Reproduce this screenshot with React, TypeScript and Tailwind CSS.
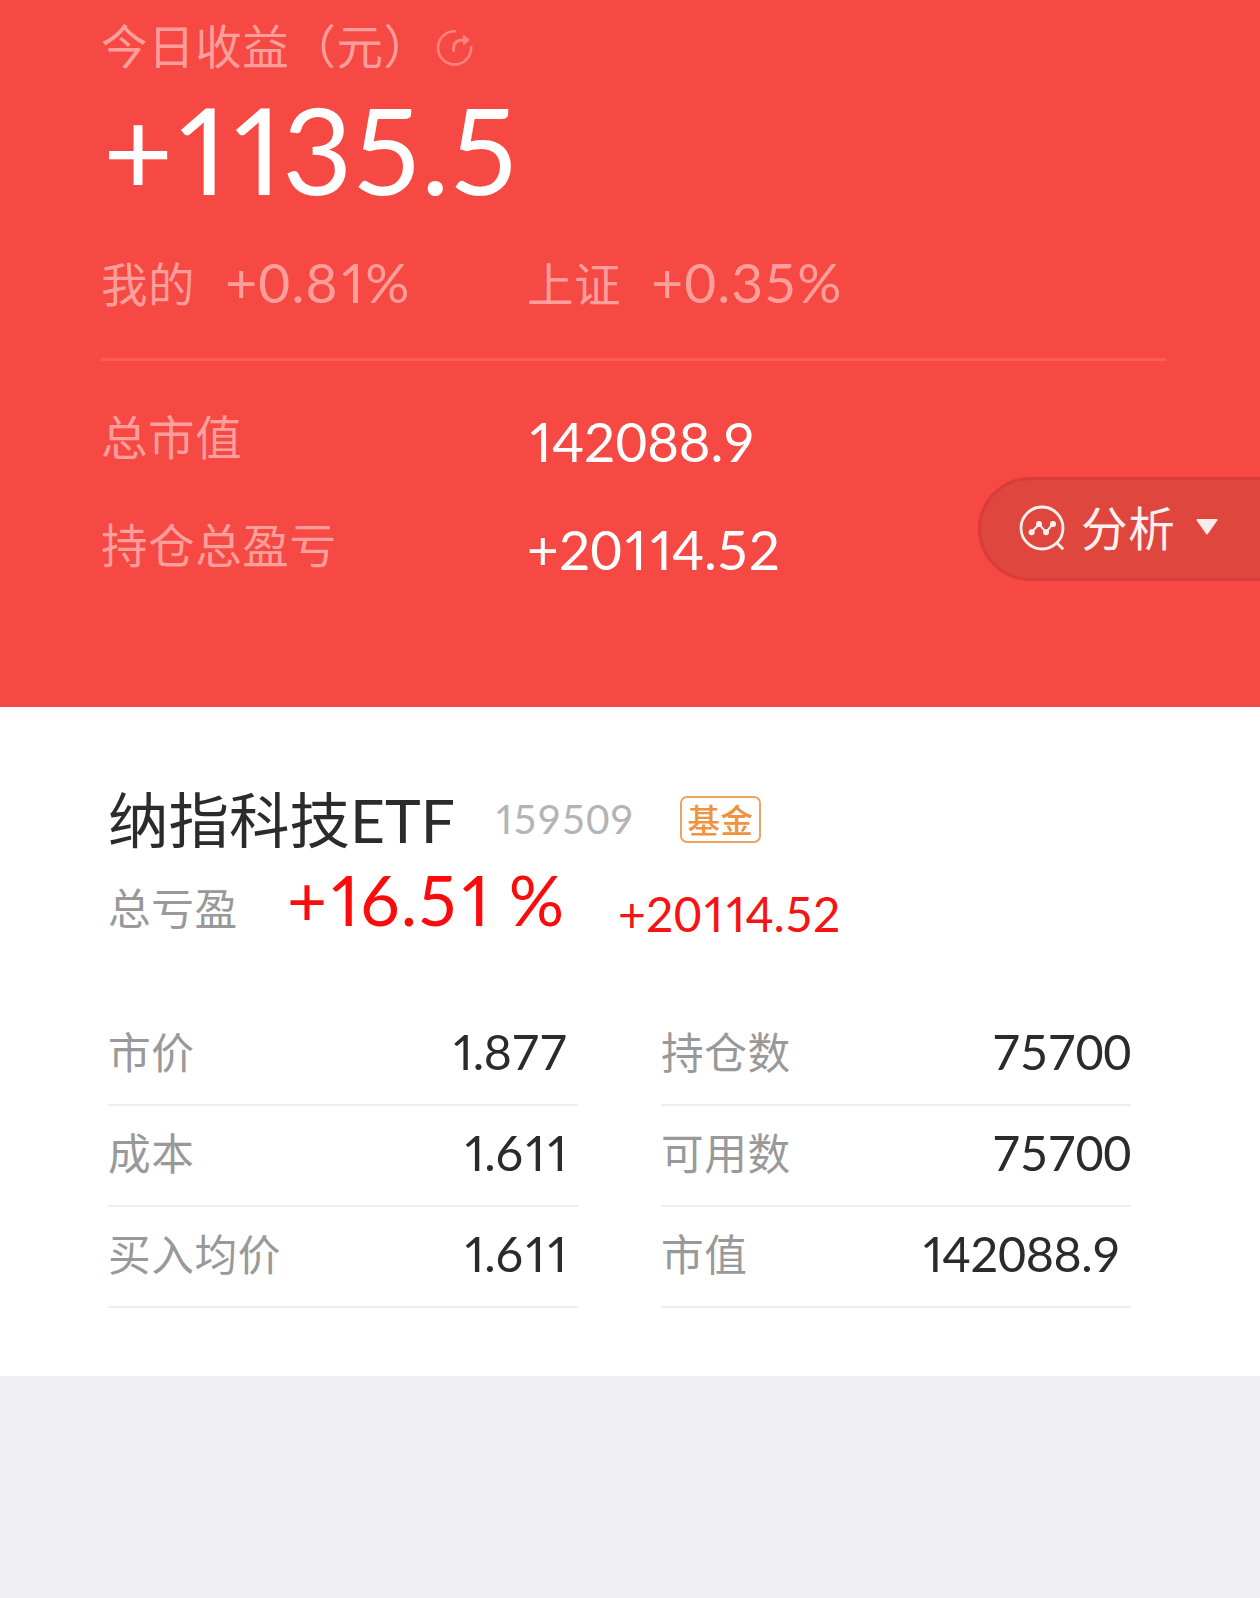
const cjk = "font-['Noto_Sans_CJK_SC',sans-serif]";
const num = "font-['Lato','Noto_Sans_CJK_SC',sans-serif] whitespace-pre";

function RefreshIcon() {
  return (
    <svg className="size-[40px]" viewBox="0 0 40 40" fill="none" stroke="#ff827d" strokeWidth="2.6" strokeLinecap="round">
      <path d="M20 3.2A16.6 16.6 0 1 0 36.2 19.3" />
      <path d="M18.6 22.6V20C18.6 14.5 21.5 12 28 12" strokeWidth="3" />
      <path d="M28.6 7.6L34 12L28.6 16.4Z" fill="#ff827d" strokeWidth="1.4" strokeLinejoin="round" />
    </svg>
  );
}

function AnalysisIcon() {
  return (
    <svg className="size-[48px]" viewBox="0 0 48 48" fill="none" stroke="#fff1f0" strokeWidth="2.8">
      <circle cx="24" cy="24" r="21" />
      <path d="M38 38L45.2 45.2" />
      <path d="M13.8 28L21 20L28 28.3L34.8 20" strokeWidth="2" />
      <g fill="#fff1f0" stroke="none">
        <circle cx="13.6" cy="28.2" r="3" />
        <circle cx="21" cy="20" r="3" />
        <circle cx="28" cy="28.3" r="3" />
        <circle cx="35" cy="20" r="3" />
      </g>
    </svg>
  );
}

/** Figures of equal width, apart from a narrower "1". */
function Num({ children, className = '' }: { children: string; className?: string }) {
  return (
    <span className={`${num} ${className}`}>
      {children.split(/(1)/).map((part, i) =>
        part === '1' ? (
          <span key={i} className="ml-[0.055em] mr-[0.01em] [font-feature-settings:'pnum']">1</span>
        ) : (
          part
        ),
      )}
    </span>
  );
}

function Cell({ label, value, pad }: { label: string; value: string; pad: string }) {
  return (
    <div className="flex h-[101px] items-start justify-between border-b-2 border-[#eeeeee] pt-[15px]">
      <span className={`${cjk} text-[42.7px] leading-[60px] tracking-[0.6px] text-[#999999]`}>{label}</span>
      <Num className={`${pad} pt-px text-[48.5px] leading-[60px] tracking-[-0.4px] text-[#2b2b2b]`}>{value}</Num>
    </div>
  );
}

export default function App() {
  return (
    <div className="flex h-[1598px] w-[1260px] flex-col overflow-hidden bg-[#efeff4]">
      <header className="relative h-[707px] shrink-0 bg-[#f64943] pl-[101px] pr-[94px] pt-[14px]">
        <div className="flex h-[60px] items-center">
          <span className={`${cjk} text-[46.5px] leading-[60px] tracking-[0.6px] text-[#ff9e9b]`}>今日收益（元）</span>
          <span className="ml-[4px] mt-[7px]"><RefreshIcon /></span>
        </div>
        <div className="ml-[2px] mt-[15px] flex h-[119px]">
          <Num className="text-[121px] leading-[120px] tracking-[-0.8px] text-white">+1135.5</Num>
        </div>
        <div className="mt-[44px] flex h-[60px] leading-[60px] text-[#ff9e9b]">
          <div className="flex w-[426px] gap-[30px]">
            <span className={`${cjk} text-[46.5px] tracking-[0.6px]`}>我的</span>
            <Num className="text-[55px] tracking-[1.2px]">+0.81%</Num>
          </div>
          <div className="flex gap-[30px]">
            <span className={`${cjk} text-[46.5px] tracking-[0.6px]`}>上证</span>
            <Num className="text-[55px] tracking-[1.1px]">+0.35%</Num>
          </div>
        </div>
        <div className="mt-[46px] h-[3px] bg-[#f95c57]" />
        <div className="mt-[44px] flex">
          <div className={`${cjk} flex w-[426px] flex-col gap-[48px] text-[46.5px] leading-[60px] tracking-[0.6px] text-[#ff9e9b]`}>
            <span>总市值</span>
            <span>持仓总盈亏</span>
          </div>
          <div className="flex flex-col gap-[48px] pt-[6px] text-[54.6px] leading-[60px] text-white">
            <Num>142088.9</Num>
            <Num>+20114.52</Num>
          </div>
        </div>
        <div className="absolute right-0 top-[477px] flex h-[104px] w-[282px] items-center rounded-l-full border-y-[3px] border-l-[3px] border-[#db3b3a] bg-[#df463e] pb-[2px] pl-[37px]">
          <AnalysisIcon />
          <span className={`${cjk} -mt-[5px] ml-[15px] text-[46.5px] leading-[60px] tracking-[0.8px] text-[#fff1f0]`}>分析</span>
          <svg className="-mt-[3px] ml-[19px] h-[18px] w-[24px]" viewBox="0 0 24 18">
            <path d="M2.5 2H21.5L12 15.5Z" fill="#fdeaea" stroke="#fdeaea" strokeWidth="2" strokeLinejoin="round" />
          </svg>
        </div>
      </header>

      <main className="h-[669px] shrink-0 bg-white pl-[108px] pr-[129px] pt-[78px]">
        <div className="flex h-[70px] items-start text-[#2b2b2b]">
          <span className={`${num} w-[386px] text-[60.5px] leading-[70px]`}>纳指科技ETF</span>
          <Num className="w-[186px] text-[40.5px] leading-[68px] tracking-[0.7px] text-[#b4b4b4]">159509</Num>
          <span className={`${cjk} mt-[11px] flex h-[47px] w-[81px] items-center justify-center rounded-[7px] border-2 border-[#eba563] pb-[2px] text-[32.5px] font-medium leading-[44px] tracking-[0.6px] text-[#ee9440]`}>基金</span>
        </div>
        <div className="mt-[10px] flex h-[80px] items-start">
          <span className={`${cjk} w-[179px] pt-[6px] text-[42.7px] leading-[70px] tracking-[0.6px] text-[#999999]`}>总亏盈</span>
          <Num className="w-[331px] text-[69px] leading-[70px] tracking-[0.6px] text-[#fb0b0b]">+16.51 %</Num>
          <Num className="pt-[14px] text-[48px] leading-[70px] text-[#f51414]">+20114.52</Num>
        </div>
        <div className="mt-[60px] flex justify-between">
          <div className="w-[470px]">
            <Cell label="市价" value="1.877" pad="pr-[11px]" />
            <Cell label="成本" value="1.611" pad="pr-[11px]" />
            <Cell label="买入均价" value="1.611" pad="pr-[11px]" />
          </div>
          <div className="w-[470px]">
            <Cell label="持仓数" value="75700" pad="pr-0" />
            <Cell label="可用数" value="75700" pad="pr-0" />
            <Cell label="市值" value="142088.9" pad="pr-[11px]" />
          </div>
        </div>
      </main>
    </div>
  );
}
